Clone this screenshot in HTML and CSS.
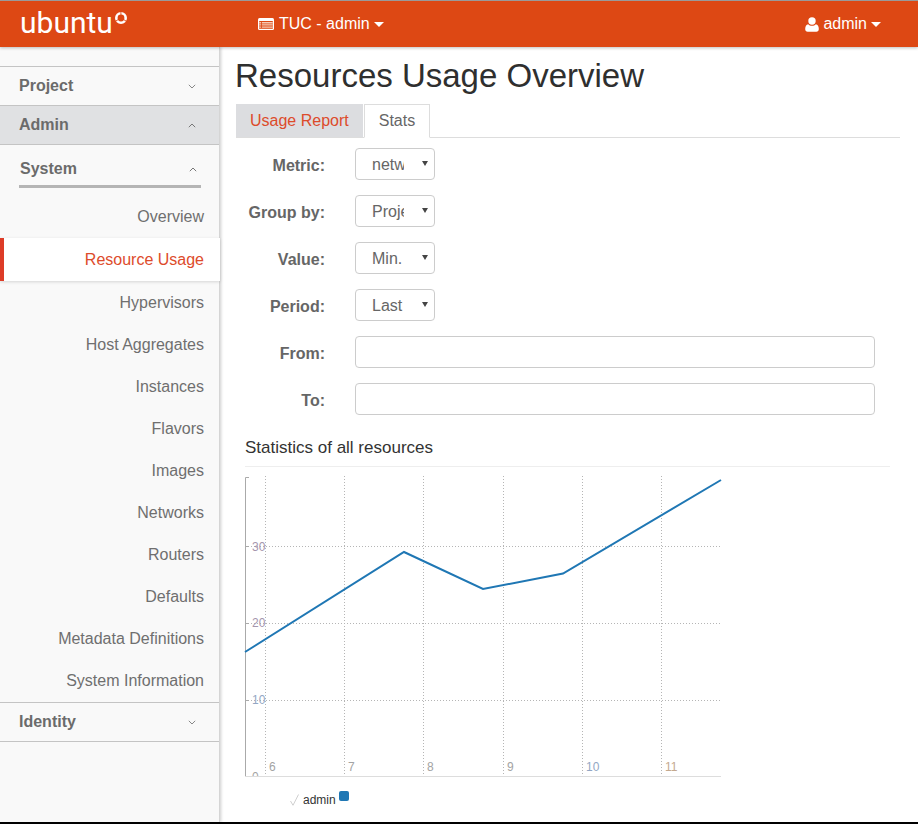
FILE: index.html
```html
<!DOCTYPE html>
<html>

<head>
    <title>Resources Usage Overview</title>
    <link rel="stylesheet" href="styles.css">
</head>

<body>
    <div class="page">
        <header class="navbar">
            <a class="brand">
                <span class="brand-name">ubuntu</span>
                <svg class="brand-mark" width="14" height="14" viewBox="0 0 14 14">
                    <circle cx="7" cy="7" r="4.700" fill="none" stroke="#fff" stroke-width="2.600"/>
                    <path d="M7 7 13.500 3.400M7 7 .5 3.400M7 7v7" stroke="#dd4814" stroke-width="0.8" transform="rotate(60 7 7)"/>
                    <circle cx="7" cy="7" r="2.600" fill="#dd4814"/>
                </svg>
            </a>
            <a class="nav-project">
                <svg width="16" height="12" viewBox="0 0 16 12">
                    <rect width="16" height="12" rx="1.500" fill="#fff"/>
                    <path d="M1.200 3h13.600v7.800H1.200z" fill="#dd4814"/>
                    <path d="M1.200 4h2v1.400h-2zM4 4h10.800v1.400H4zM1.200 6.200h2v1.400h-2zM4 6.200h10.800v1.400H4zM1.200 8.400h2v1.400h-2zM4 8.400h10.800v1.400H4z" fill="#f6c9b5"/>
                </svg>
                <span class="nav-label">TUC - admin</span>
                <span class="caret"></span>
            </a>
            <a class="nav-user">
                <svg width="14" height="15" viewBox="0 0 14 15">
                    <circle cx="7" cy="4" r="3.700" fill="#fff"/>
                    <path d="M3.200 7.200C1.200 7.600.2 9.400.2 12c0 1.800 1 2.800 2.400 2.800h8.800c1.400 0 2.400-1 2.400-2.800 0-2.600-1-4.400-3-4.800C9.800 8.200 8.500 8.800 7 8.800S4.200 8.200 3.200 7.200z" fill="#fff"/>
                </svg>
                <span class="nav-label">admin</span>
                <span class="caret"></span>
            </a>
        </header>

        <div class="layout">
            <nav class="sidebar">
                <div class="side-group">
                    <span>Project</span>
                    <svg class="chev" width="8" height="5" viewBox="0 0 8 5"><path d="M.8.8 4 4 7.200.8" fill="none" stroke="#888" stroke-width="1"/></svg>
                </div>
                <div class="side-group side-group-open">
                    <span>Admin</span>
                    <svg class="chev" width="8" height="5" viewBox="0 0 8 5"><path d="M.8 4.200 4 1l3.200 3.200" fill="none" stroke="#777" stroke-width="1"/></svg>
                </div>
                <div class="side-sub">
                    <span>System</span>
                    <svg class="chev" width="8" height="5" viewBox="0 0 8 5"><path d="M.8 4.200 4 1l3.200 3.200" fill="none" stroke="#777" stroke-width="1"/></svg>
                </div>
                <ul class="side-items">
                    <li>Overview</li>
                    <li class="active">Resource Usage</li>
                    <li>Hypervisors</li>
                    <li>Host Aggregates</li>
                    <li>Instances</li>
                    <li>Flavors</li>
                    <li>Images</li>
                    <li>Networks</li>
                    <li>Routers</li>
                    <li>Defaults</li>
                    <li>Metadata Definitions</li>
                    <li>System Information</li>
                </ul>
                <div class="side-group side-group-last">
                    <span>Identity</span>
                    <svg class="chev" width="8" height="5" viewBox="0 0 8 5"><path d="M.8.8 4 4 7.200.8" fill="none" stroke="#888" stroke-width="1"/></svg>
                </div>
            </nav>

            <main class="content">
                <h1>Resources Usage Overview</h1>
                <div class="tabs">
                    <a class="tab">Usage Report</a>
                    <a class="tab tab-active">Stats</a>
                </div>

                <form class="stats-form">
                    <div class="form-row">
                        <label for="metric">Metric:</label>
                        <div class="select-wrap">
                            <select id="metric"><option>network.incoming.bytes</option></select>
                        </div>
                    </div>
                    <div class="form-row">
                        <label for="group">Group by:</label>
                        <div class="select-wrap">
                            <select id="group"><option>Project</option></select>
                        </div>
                    </div>
                    <div class="form-row">
                        <label for="value">Value:</label>
                        <div class="select-wrap">
                            <select id="value"><option>Min.</option></select>
                        </div>
                    </div>
                    <div class="form-row">
                        <label for="period">Period:</label>
                        <div class="select-wrap">
                            <select id="period"><option>Last day</option></select>
                        </div>
                    </div>
                    <div class="form-row">
                        <label for="from">From:</label>
                        <input type="text" id="from">
                    </div>
                    <div class="form-row">
                        <label for="to">To:</label>
                        <input type="text" id="to">
                    </div>
                </form>

                <h2>Statistics of all resources</h2>

                <svg class="chart" width="480" height="310" viewBox="244 475 480 310">
                    <defs>
                        <clipPath id="plot"><rect x="244" y="475" width="480" height="301"/></clipPath>
                    </defs>
                    <g class="grid">
                        <path d="M265.500 476V777M344.500 476V777M423.500 476V777M503.500 476V777M582.500 476V777M661.500 476V777"/>
                        <path d="M245 546.500H721M245 623.500H721M245 700.500H721"/>
                    </g>
                    <path class="axis-y" d="M249 477.500H245.500V776.500H249M245.500 546.500H249M245.500 623.500H249M245.500 700.500H249"/>
                    <path class="axis-x" d="M245 776.500H721"/>
                    <g class="tick" clip-path="url(#plot)">
                        <text x="252" y="551" class="tick-purple">30</text>
                        <text x="252" y="627" class="tick-purple">20</text>
                        <text x="252" y="704" class="tick-blue">10</text>
                        <text x="252" y="781">0</text>
                        <text x="269" y="771">6</text>
                        <text x="348" y="771">7</text>
                        <text x="427" y="771">8</text>
                        <text x="507" y="771">9</text>
                        <text x="586" y="771" class="tick-blue">10</text>
                        <text x="665" y="771" class="tick-tan">11</text>
                    </g>
                    <path class="series" d="M245 652 404 552 483 589 563 573.500 721 480"/>
                </svg>
                <div class="legend">
                    <svg class="legend-check" width="9" height="12" viewBox="0 0 9 12">
                        <path d="M.5 7 3 11.300 8.500.5" fill="none" stroke="#cfcfcf" stroke-width="1"/>
                    </svg>
                    <span class="legend-label">admin</span>
                    <span class="legend-swatch"></span>
                </div>
            </main>
        </div>
    </div>
</body>

</html>
```
FILE: styles.css
```css
html, body {
    margin: 0;
    padding: 0;
    background-color: #000;
}

body {
    font-family: "Liberation Sans", Arial, sans-serif;
    font-size: 16px;
    color: #333;
}

.page {
    width: 918px;
    height: 822px;
    display: flex;
    flex-direction: column;
    overflow: hidden;
    background: #fff;
}

.navbar {
    height: 46px;
    flex: none;
    display: flex;
    align-items: center;
    background-color: #dd4814;
    border-top: 1px solid #9a9a9a;
    color: #fff;
    position: relative;
    z-index: 2;
    box-shadow: 0 1px 3px rgba(0, 0, 0, 0.25);
}

.brand {
    width: 258px;
    padding-left: 20px;
    box-sizing: border-box;
    display: flex;
    align-items: flex-start;
    height: 100%;
}

.brand-name {
    font-family: Roboto, sans-serif;
    font-size: 30px;
    font-weight: 400;
    line-height: 44px;
}

.brand-mark {
    margin: 10px 0 0 1px;
}

.nav-project,
.nav-user {
    display: flex;
    align-items: center;
}

.nav-project .nav-label {
    margin-left: 5px;
}

.nav-user {
    margin-left: auto;
    margin-right: 37px;
}

.nav-user .nav-label {
    margin-left: 4px;
}

.caret {
    width: 0;
    height: 0;
    margin-left: 4px;
    border-top: 5px solid #fff;
    border-left: 5px solid transparent;
    border-right: 5px solid transparent;
}

.layout {
    flex: 1;
    display: flex;
    min-height: 0;
}

.sidebar {
    width: 219px;
    flex: none;
    padding-top: 19px;
    background: #f9f9f9;
    border-right: 1px solid #d5d5d5;
    box-shadow: 1px 0 3px rgba(0, 0, 0, 0.2);
    position: relative;
    z-index: 1;
}

.side-group {
    height: 38px;
    padding: 0 23px 0 19px;
    display: flex;
    align-items: center;
    justify-content: space-between;
    border-top: 1px solid #c4c4c4;
    font-weight: bold;
    color: #6b6b6b;
}

.side-group-open {
    background: #e0e1e3;
    border-bottom: 1px solid #c4c4c4;
}

.side-group-last {
    border-bottom: 1px solid #c4c4c4;
}

.side-sub {
    height: 40px;
    margin: 0 18px 0 19px;
    padding: 0 4px 0 1px;
    display: flex;
    align-items: flex-end;
    justify-content: space-between;
    border-bottom: 3px solid #b5b5b5;
    line-height: 32px;
    font-weight: bold;
    color: #6b6b6b;
}

.side-sub .chev {
    margin-bottom: 13px;
}

.side-items {
    list-style: none;
    margin: 8px 0 0 0;
    padding: 0;
}

.side-items li {
    height: 42px;
    line-height: 42px;
    padding-right: 15px;
    text-align: right;
    color: #6f6f6f;
}

.side-items li.active {
    height: 43px;
    margin-bottom: 1px;
    line-height: 44px;
    margin-right: -1px;
    padding-right: 16px;
    background: #fff;
    color: #dd4b2b;
    box-sizing: border-box;
    border-left: 4px solid #dd3c27;
    box-shadow: 0 1px 3px rgba(0, 0, 0, 0.15);
    position: relative;
}

.content {
    flex: 1;
    padding: 0 18px 0 16px;
    min-width: 0;
}

h1 {
    margin: 10px 0 9px -1px;
    font-size: 33px;
    font-weight: normal;
    line-height: 38px;
    color: #2f2f2f;
}

.tabs {
    display: flex;
    align-items: flex-end;
    height: 33px;
    border-bottom: 1px solid #ddd;
}

.tab {
    height: 33px;
    line-height: 34px;
    padding: 0 14px;
    margin-right: 1px;
    background: #dcdde0;
    color: #dd4b2b;
}

.tab-active {
    height: 32px;
    line-height: 32px;
    margin-bottom: -1px;
    background: #fff;
    color: #666;
    border: 1px solid #ddd;
    border-bottom: 1px solid #fff;
}

.stats-form {
    margin-top: 10px;
}

.form-row {
    display: flex;
    align-items: center;
    height: 32px;
    margin-bottom: 15px;
}

.form-row label {
    width: 89px;
    margin-right: 30px;
    padding-top: 4px;
    text-align: right;
    font-weight: bold;
    color: #666;
}

.select-wrap {
    position: relative;
    width: 80px;
    height: 32px;
}

.select-wrap::after {
    content: "";
    position: absolute;
    top: 13px;
    right: 7px;
    border-top: 5px solid #444;
    border-left: 3px solid transparent;
    border-right: 3px solid transparent;
}

select {
    appearance: none;
    width: 80px;
    height: 32px;
    padding: 0 30px 0 16px;
    border: 1px solid #ccc;
    border-radius: 4px;
    background: #fff;
    color: #666;
    font: 16px "Liberation Sans", Arial, sans-serif;
}

input[type="text"] {
    width: 520px;
    height: 32px;
    box-sizing: border-box;
    border: 1px solid #ccc;
    border-radius: 4px;
    background: #fff;
}

h2 {
    margin: 23px 10px 8px 9px;
    padding-bottom: 8px;
    border-bottom: 1px solid #eee;
    font-size: 17px;
    font-weight: normal;
    line-height: 20px;
    color: #333;
}

.chart {
    display: block;
    margin-left: 8px;
    overflow: hidden;
}

.grid path {
    fill: none;
    stroke: #b5b5b5;
    stroke-width: 1;
    stroke-dasharray: 1 2;
}

.axis-y {
    fill: none;
    stroke: #aaa;
    stroke-width: 1;
}

.axis-x {
    fill: none;
    stroke: #ddd;
    stroke-width: 1;
}

.tick text {
    font-size: 12px;
    fill: #a3a3a3;
}

.tick .tick-purple {
    fill: #a596ad;
}

.tick .tick-blue {
    fill: #93a7c4;
}

.tick .tick-tan {
    fill: #c4a98f;
}

.series {
    fill: none;
    stroke: #1f77b4;
    stroke-width: 2;
}

.legend {
    display: flex;
    align-items: center;
    height: 16px;
    margin: 7px 0 0 54px;
    font-size: 12px;
    color: #333;
}

.legend-check {
    margin-right: 4px;
}

.legend-swatch {
    width: 10px;
    height: 10px;
    margin: -9px 0 0 3px;
    border-radius: 2px;
    background: #1f77b4;
}
```
